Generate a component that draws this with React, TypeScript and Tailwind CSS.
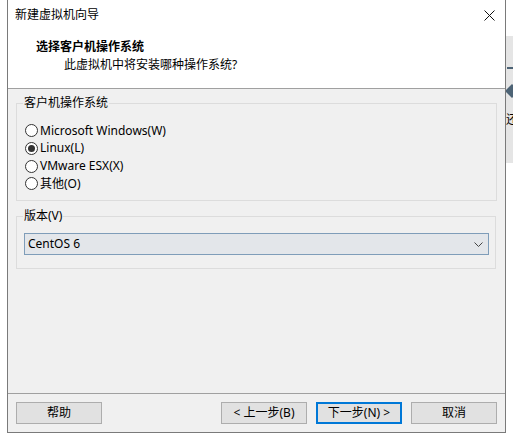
import React from "react";

const font = { fontFamily: '"Noto Sans", "Noto Sans CJK SC", sans-serif' };

function Radio({ label, checked }: { label: string; checked?: boolean }) {
  return (
    <div className="flex h-[17.67px] items-center">
      <span className="flex h-[13px] w-[13px] items-center justify-center rounded-full border border-[#333333] bg-white">
        {checked && <span className="h-[7px] w-[7px] rounded-full bg-[#333333]" />}
      </span>
      <span className="ml-[2px] text-[12px] leading-[16px] text-black">{label}</span>
    </div>
  );
}

function Btn({ label, primary }: { label: string; primary?: boolean }) {
  return (
    <div
      className={
        "flex h-[22px] w-[86px] items-center justify-center bg-[#e1e1e1] text-[12px] leading-[16px] text-black " +
        (primary ? "border-2 border-[#0078d7]" : "border border-[#adadad]")
      }
    >
      {label}
    </div>
  );
}

export default function App() {
  return (
    <div className="flex h-[440px] w-[513px] overflow-hidden bg-white" style={font}>
      <div className="w-[7px]" />
      <div className="flex h-[433px] w-[499px] flex-col border-x border-b border-[#7a7a7a] bg-white">
        {/* header */}
        <div className="flex h-[88px] flex-col bg-white">
          <div className="flex h-[30px] items-center justify-between pl-[7px] pr-[10px]">
            <span className="text-[12px] leading-[16px] text-black">新建虚拟机向导</span>
            <svg width="11" height="11" viewBox="0 0 11 11">
              <path d="M0.5 0.5 L10.5 10.5 M10.5 0.5 L0.5 10.5" stroke="#111" strokeWidth="1" />
            </svg>
          </div>
          <div className="pl-[28px] pt-[9px] text-[12px] font-bold leading-[16px] text-black">选择客户机操作系统</div>
          <div className="pl-[56px] pt-[2px] text-[12px] leading-[16px] text-black">此虚拟机中将安装哪种操作系统?</div>
        </div>
        <div className="h-px bg-[#a0a0a0]" />
        {/* body */}
        <div className="flex h-[304px] flex-col bg-[#f0f0f0] px-[8px] pt-[14px]">
          <div className="relative h-[98px] border border-[#dcdcdc] pl-[8px] pt-[18px]">
            <span className="absolute left-[6px] top-[-9px] bg-[#f0f0f0] px-[1px] text-[12px] leading-[16px] text-black">
              客户机操作系统
            </span>
            <Radio label="Microsoft Windows(W)" />
            <Radio label="Linux(L)" checked />
            <Radio label="VMware ESX(X)" />
            <Radio label="其他(O)" />
          </div>
          <div className="relative mt-[15px] mr-[1px] h-[53px] border border-[#dcdcdc] pl-[7px] pr-[6px] pt-[16px]">
            <span className="absolute left-[6px] top-[-9px] bg-[#f0f0f0] px-[1px] text-[12px] leading-[16px] text-black">
              版本(V)
            </span>
            <div className="flex h-[22px] items-center justify-between border border-[#7f9db9] bg-[#e3e6ea] pl-[3px] pr-[5px]">
              <span className="text-[12px] leading-[16px] text-black">CentOS 6</span>
              <svg width="9" height="5" viewBox="0 0 9 5">
                <path d="M0.5 0.5 L4.5 4.5 L8.5 0.5" fill="none" stroke="#444" strokeWidth="1" />
              </svg>
            </div>
          </div>
        </div>
        <div className="h-px bg-[#a0a0a0]" />
        {/* footer */}
        <div className="flex h-[38px] items-start bg-[#f0f0f0] px-[8px] pt-[8px]">
          <Btn label="帮助" />
          <div className="flex-1" />
          <Btn label="< 上一步(B)" />
          <div className="w-[9px]" />
          <Btn label="下一步(N) >" primary />
          <div className="w-[9px]" />
          <Btn label="取消" />
        </div>
      </div>
      {/* background strip */}
      <div className="flex w-[7px] flex-col overflow-hidden">
        <div className="h-[36px] bg-white" />
        <div className="relative flex h-[127px] flex-col bg-[#e5e5e5]">
          <div className="mt-[31px] ml-[1px] h-[2px] w-[6px] bg-[#4d6375]" />
          <div className="mt-[17px] ml-[1px] h-[10px] w-[10px] rotate-45 bg-[#4d6375]" />
          <span className="mt-[16px] text-[12px] leading-[16px] text-black">还</span>
        </div>
        <div className="flex-1 bg-white" />
      </div>
    </div>
  );
}
